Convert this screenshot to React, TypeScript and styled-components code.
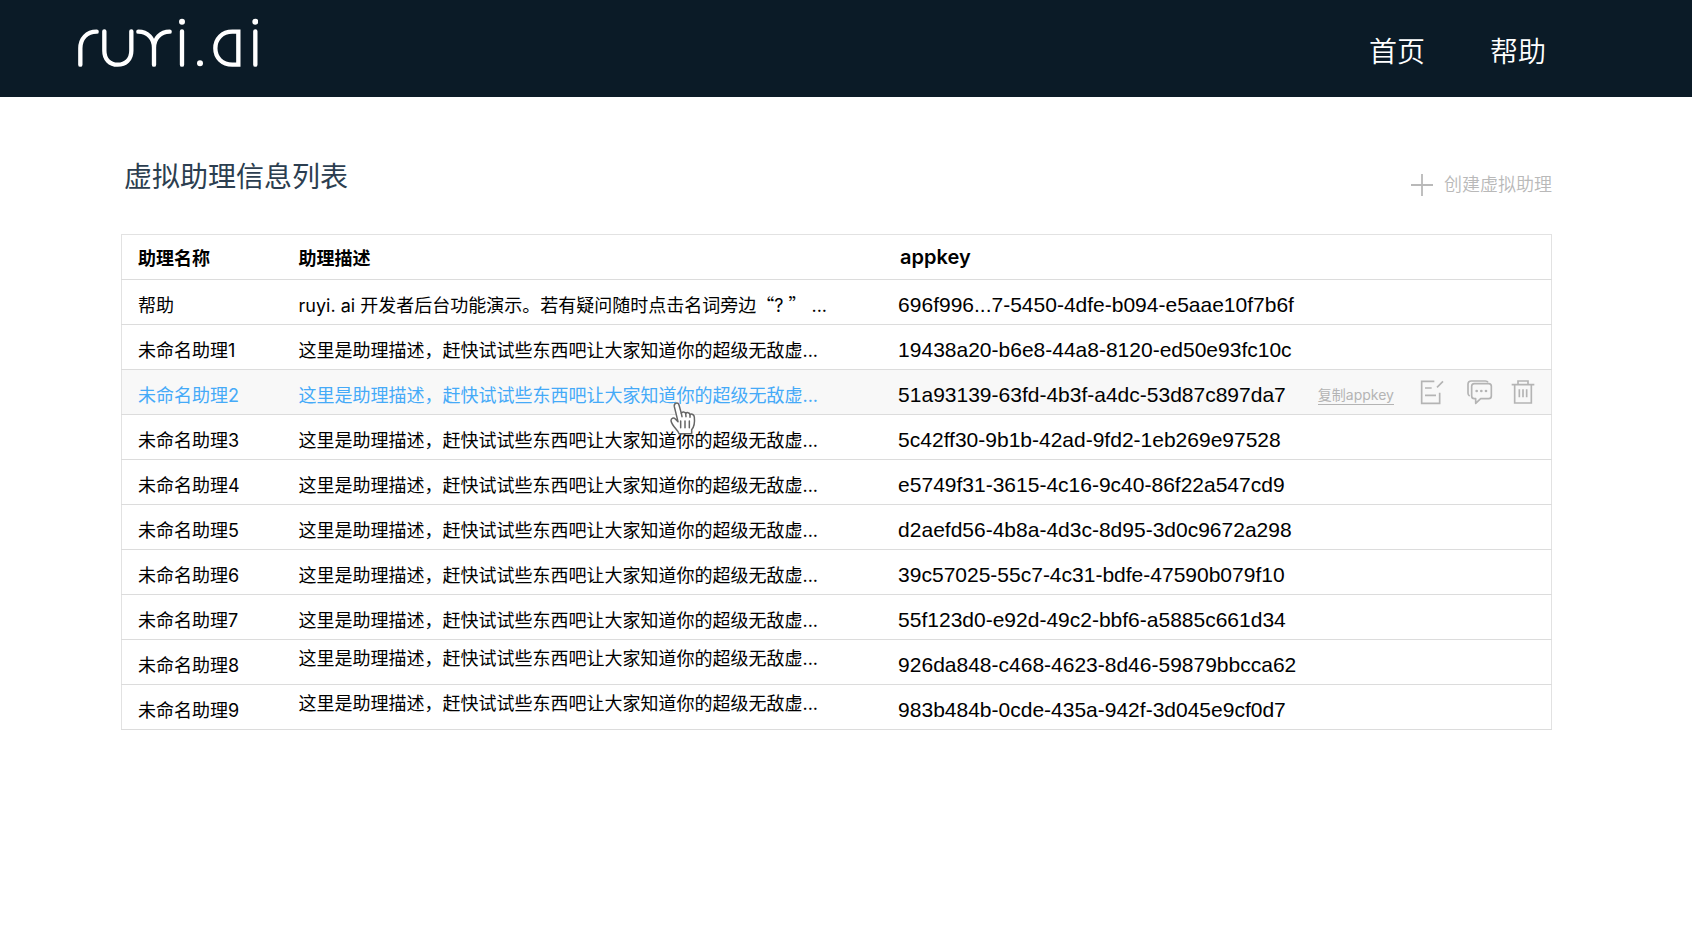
import React from "react";
import styled, { createGlobalStyle } from "styled-components";

const GlobalStyle = createGlobalStyle`
  *, *::before, *::after { box-sizing: border-box; }
  body {
    margin: 0;
    background: #fff;
    color: #000;
    font-family: Inter, "Noto Sans CJK SC", sans-serif;
    font-size: 18px;
    line-height: 24px;
  }
`;

const Header = styled.header`
  display: flex;
  justify-content: space-between;
  align-items: flex-start;
  height: 97px;
  padding: 18px 146px 0 78px;
  background: #0b1b27;
`;

const HomeLink = styled.a`
  display: block;
  line-height: 0;
`;

const Nav = styled.nav`
  display: flex;
  gap: 65px;
  padding-top: 14px;
`;

const NavLink = styled.a`
  color: #fff;
  font-size: 28px;
  font-weight: 350;
  line-height: 40px;
  text-decoration: none;
`;

const Main = styled.main`
  padding: 58px 140px 40px 121px;
`;

const TitleBar = styled.div`
  display: flex;
  justify-content: space-between;
  align-items: flex-end;
  height: 42px;
  margin-bottom: 37px;
`;

const Title = styled.h1`
  margin: 0;
  align-self: flex-start;
  padding-left: 3px;
  color: #2c3e50;
  font-size: 28px;
  font-weight: 400;
  line-height: 44px;
`;

const CreateButton = styled.button`
  display: flex;
  align-items: center;
  gap: 11px;
  padding: 0;
  border: 0;
  background: none;
  color: #b9b9b9;
  font: 350 18px/24px Inter, "Noto Sans CJK SC", sans-serif;
  cursor: pointer;
`;

const Table = styled.table`
  width: 100%;
  table-layout: fixed;
  border-collapse: collapse;
  border: 1px solid #e2e2e2;
`;

const NameCol = styled.col`
  width: 161px;
`;

const DescriptionCol = styled.col`
  width: 42%;
`;

const HeadCell = styled.th`
  height: 45px;
  padding: 3px 0 0 16px;
  border-bottom: 1px solid #dcdcdc;
  font-weight: 600;
  text-align: left;
  white-space: nowrap;
`;

const KeyHead = styled(HeadCell)`
  padding: 0 0 0 17px;
  font-size: 20px;
`;

const Row = styled.tr<{ $active: boolean }>`
  background: ${(p) => (p.$active ? "#f8f8f8" : "#fff")};
  color: ${(p) => (p.$active ? "#45aaf8" : "#000")};
`;

const Cell = styled.td<{ $raised?: boolean }>`
  position: relative;
  height: 45px;
  padding: ${(p) => (p.$raised ? "0 0 6px 16px" : "8px 0 0 16px")};
  border-bottom: 1px solid #dcdcdc;
  white-space: nowrap;
`;

const Quote = styled.span`
  font-family: "Noto Sans CJK SC", sans-serif;
  line-height: 1;
`;

const KeyCell = styled(Cell)`
  padding-top: 6px;
  padding-left: 15px;
  color: #000;
`;

const KeyLine = styled.div`
  display: flex;
  align-items: center;
  justify-content: space-between;
  height: 24px;
  padding-right: 16px;
`;

const KeyText = styled.span`
  font-family: "Liberation Sans", sans-serif;
  font-size: 21px;
`;

const Actions = styled.div`
  display: flex;
  align-items: flex-end;
  gap: 18px;
  margin-bottom: 6px;
  color: #b4b4b4;
`;

const CopyButton = styled.button`
  margin-right: 8px;
  padding: 0;
  border: 0;
  border-bottom: 1px solid #b4b4b4;
  background: none;
  color: inherit;
  font: 400 14px/18px Inter, "Noto Sans CJK SC", sans-serif;
  cursor: pointer;
`;

const IconButton = styled.button`
  padding: 0;
  border: 0;
  background: none;
  color: inherit;
  line-height: 0;
  cursor: pointer;
`;

const Pointer = styled.svg`
  position: absolute;
  z-index: 1;
  top: 31px;
  left: 386px;
  pointer-events: none;
`;

const Logo = () => (
  <svg width="180" height="50" viewBox="54 54 540 150" fill="none" stroke="#fff" strokeWidth="13" strokeLinecap="round" role="img" aria-label="ruyi.ai">
    <path d="M61 194V145C61 116 80 95 110 95" />
    <path d="M133 94V152C133 178 149 194 173 194S214 178 214 152V94" />
    <path d="M235 95C263 95 282 115 282 143V194M329 95C301 95 282 115 282 143" />
    <path d="M366 94V194M586 94V194" />
    <path d="M535 194V95H517C486 95 466 117 466 145S486 194 517 194Z" />
    <g fill="#fff" stroke="none">
      <circle cx="366" cy="65" r="9" />
      <circle cx="420" cy="190" r="9" />
      <circle cx="586" cy="65" r="9" />
    </g>
  </svg>
);

const PlusIcon = () => (
  <svg width="22" height="22" viewBox="0 0 22 22" fill="none" stroke="currentColor" strokeWidth="1.8" aria-hidden="true">
    <path d="M0 11H22M11 0V22" />
  </svg>
);

const EditIcon = () => (
  <svg width="24" height="26" viewBox="0 0 72 78" fill="none" stroke="currentColor" strokeWidth="5" aria-hidden="true">
    <path d="M43 7H5V73H59V41M51 25L69 7M15 27H35M15 49H48" />
  </svg>
);

const ChatIcon = () => (
  <svg width="31" height="26" viewBox="-14 0 93 78" fill="none" stroke="currentColor" strokeWidth="5" strokeLinejoin="round" aria-hidden="true">
    <path d="M9 51C5 49 4 47 4 43V16Q4 6 14 6H56Q62 6 64 10" />
    <path d="M23 14H66Q74 14 74 22V51Q74 59 66 59H42L27 73V59H23Q15 59 15 51V22Q15 14 23 14Z" />
    <g fill="currentColor" stroke="none">
      <circle cx="30" cy="36" r="4" />
      <circle cx="44" cy="36" r="4" />
      <circle cx="58" cy="36" r="4" />
    </g>
  </svg>
);

const TrashIcon = () => (
  <svg width="24" height="26" viewBox="0 0 72 78" fill="none" stroke="currentColor" strokeWidth="5" aria-hidden="true">
    <path d="M2 17H70M21 17V6H51V17M11 17V72H61V17M25 31V55M36 31V55M47 31V55" />
  </svg>
);

const HandPointer = () => (
  <Pointer width="28" height="36" viewBox="0 0 84 108" fill="#fff" stroke="#666" strokeWidth="4.5" strokeLinejoin="round" strokeLinecap="round" aria-hidden="true">
    <path d="M30 98C28 88 8 75 6 59C6 51 14 49 19 54L27 62L16 17C14 5 27 3 30 12L37 37C39 31 49 32 50 38C53 33 62 34 63 41C68 37 76 41 76 49C78 67 75 78 68 86V98Z" />
    <path d="M37 37L39 47M50 38L51 47M63 41V49M35 60V80M48 60V80M61 60V80" fill="none" />
  </Pointer>
);

const SAMPLE = "这里是助理描述，赶快试试些东西吧让大家知道你的超级无敌虚...";

const INTRO = (
  <>
    ruyi. ai 开发者后台功能演示。若有疑问随时点击名词旁边<Quote>“</Quote>? <Quote>”</Quote> ...
  </>
);

type Assistant = {
  name: string;
  description: React.ReactNode;
  appkey: string;
  active?: boolean;
  raised?: boolean;
};

const ASSISTANTS: Assistant[] = [
  { name: "帮助", description: INTRO, appkey: "696f996...7-5450-4dfe-b094-e5aae10f7b6f" },
  { name: "未命名助理1", description: SAMPLE, appkey: "19438a20-b6e8-44a8-8120-ed50e93fc10c" },
  { name: "未命名助理2", description: SAMPLE, appkey: "51a93139-63fd-4b3f-a4dc-53d87c897da7", active: true },
  { name: "未命名助理3", description: SAMPLE, appkey: "5c42ff30-9b1b-42ad-9fd2-1eb269e97528" },
  { name: "未命名助理4", description: SAMPLE, appkey: "e5749f31-3615-4c16-9c40-86f22a547cd9" },
  { name: "未命名助理5", description: SAMPLE, appkey: "d2aefd56-4b8a-4d3c-8d95-3d0c9672a298" },
  { name: "未命名助理6", description: SAMPLE, appkey: "39c57025-55c7-4c31-bdfe-47590b079f10" },
  { name: "未命名助理7", description: SAMPLE, appkey: "55f123d0-e92d-49c2-bbf6-a5885c661d34" },
  { name: "未命名助理8", description: SAMPLE, appkey: "926da848-c468-4623-8d46-59879bbcca62", raised: true },
  { name: "未命名助理9", description: SAMPLE, appkey: "983b484b-0cde-435a-942f-3d045e9cf0d7", raised: true },
];

const AssistantRow = ({ name, description, appkey, active = false, raised }: Assistant) => (
  <Row $active={active}>
    <Cell>{name}</Cell>
    <Cell $raised={raised} lang="zh-CN">
      {description}
      {active && <HandPointer />}
    </Cell>
    <KeyCell>
      <KeyLine>
        <KeyText>{appkey}</KeyText>
        {active && (
          <Actions>
            <CopyButton type="button">复制appkey</CopyButton>
            <IconButton type="button" aria-label="编辑"><EditIcon /></IconButton>
            <IconButton type="button" aria-label="对话"><ChatIcon /></IconButton>
            <IconButton type="button" aria-label="删除"><TrashIcon /></IconButton>
          </Actions>
        )}
      </KeyLine>
    </KeyCell>
  </Row>
);

export default function App() {
  return (
    <>
      <GlobalStyle />
      <Header>
        <HomeLink href="#home"><Logo /></HomeLink>
        <Nav>
          <NavLink href="#home">首页</NavLink>
          <NavLink href="#help">帮助</NavLink>
        </Nav>
      </Header>
      <Main>
        <TitleBar>
          <Title>虚拟助理信息列表</Title>
          <CreateButton type="button">
            <PlusIcon />
            创建虚拟助理
          </CreateButton>
        </TitleBar>
        <Table>
          <colgroup>
            <NameCol />
            <DescriptionCol />
            <col />
          </colgroup>
          <thead>
            <tr>
              <HeadCell scope="col">助理名称</HeadCell>
              <HeadCell scope="col">助理描述</HeadCell>
              <KeyHead scope="col">appkey</KeyHead>
            </tr>
          </thead>
          <tbody>
            {ASSISTANTS.map((a) => (
              <AssistantRow key={a.name} {...a} />
            ))}
          </tbody>
        </Table>
      </Main>
    </>
  );
}
